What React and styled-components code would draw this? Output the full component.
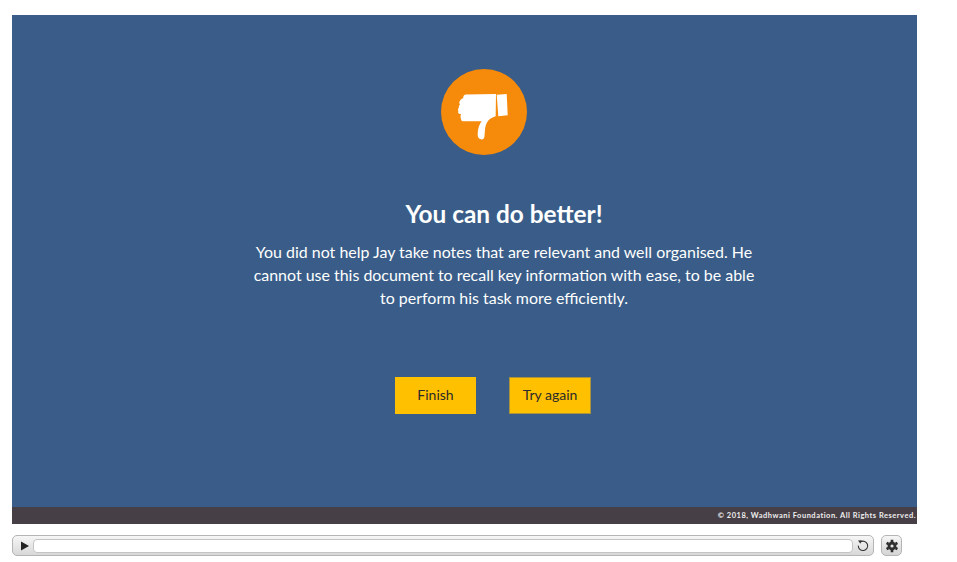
import React from "react";
import styled, { createGlobalStyle } from "styled-components";

const GlobalStyle = createGlobalStyle`
  html, body {
    margin: 0;
    padding: 0;
    background: #fff;
  }
`;

const Page = styled.div`
  width: 957px;
  height: 562px;
  padding: 15px 40px 0 12px;
  box-sizing: border-box;
  overflow: hidden;
  font-family: Lato, "Open Sans", sans-serif;
`;

const Slide = styled.div`
  height: 492px;
  background: #395d88;
  display: flex;
  flex-direction: column;
  align-items: center;
  color: #fff;
  padding: 54px 0 0 39px;
  box-sizing: border-box;
`;

const Badge = styled.div`
  width: 86px;
  height: 86px;
  border-radius: 50%;
  background: #f58a0b;
  flex: none;
`;

const Title = styled.h1`
  margin: 45px 0 0 40px;
  font-size: 24.4px;
  line-height: 28px;
  font-weight: 700;
`;

const Message = styled.p`
  margin: 12px 0 0 40px;
  width: 510px;
  font-size: 15.95px;
  line-height: 23px;
  text-align: center;
`;

const Actions = styled.div`
  display: flex;
  gap: 33px;
  margin: 68px 0 0 18px;
`;

const ActionButton = styled.button`
  width: ${(p) => (p.$outlined ? "82px" : "81px")};
  height: 37px;
  padding: 0 0 2px;
  border: 1px solid ${(p) => (p.$outlined ? "#a8923c" : "#ffc000")};
  background: #ffc000;
  color: #2b2b2b;
  font-family: inherit;
  font-size: 14px;
`;

const Footer = styled.div`
  height: 17px;
  background: #463f45;
  color: #eee;
  font-size: 7.5px;
  font-weight: 700;
  letter-spacing: 0.5px;
  line-height: 17px;
  text-align: right;
  padding-right: 1px;
`;

const ControlRow = styled.div`
  display: flex;
  gap: 7px;
  margin-top: 11px;
  width: 890px;
`;

const Bar = styled.div`
  width: 862px;
  height: 21px;
  box-sizing: border-box;
  display: flex;
  align-items: center;
  border: 1px solid #b5b5b5;
  border-radius: 5px;
  background: linear-gradient(#f6f6f6, #d8d8d8);
`;

const IconSlot = styled.div`
  width: 20px;
  padding-left: ${(p) => p.$nudge || 0}px;
  box-sizing: border-box;
  display: flex;
  align-items: center;
  justify-content: center;
  flex: none;
`;

const Track = styled.div`
  flex: 1;
  height: 12px;
  background: #fff;
  border: 1px solid #c4c4c4;
  border-radius: 4px;
`;

const GearButton = styled.div`
  width: 21px;
  height: 21px;
  box-sizing: border-box;
  border: 1px solid #b5b5b5;
  border-radius: 5px;
  background: linear-gradient(#f6f6f6, #d4d4d4);
  display: flex;
  align-items: center;
  justify-content: center;
`;

const ThumbDown = () => (
  <svg width="86" height="86" viewBox="0 0 86 86">
    <path
      fill="#fff"
      d="M24.5 25.6 L55 25 L54.7 47.3 C51 48.5 48.5 50 47 52 C45 54.5 44.4 57.5 44 60.7 C43.7 63 43.8 66 43.3 68.3 C42.8 70.2 41.2 70.8 40 70.3 C37.8 69.6 36.5 68 36.7 65.7 C36.8 62.5 37 60 38 57.3 C38.6 55.4 39.6 53.8 40.7 52.3 H24 C21.6 52.6 19.8 51.8 20 50 C19.4 48.4 19.4 46.6 20 45 C17.6 45.2 16.6 43.8 17.3 42.3 C16.8 40.8 17.2 39.2 18 38.3 C17.6 37.2 18 36.2 19 35.7 C18 34.2 18.2 32.6 19 31.7 C19.8 30.2 21 29.4 22.3 29 C22 27.4 23 25.8 24.5 25.6 Z"
    />
    <path fill="#fff" d="M55.7 25.7 L65.7 25 L66.7 46.3 L57.3 47.3 Z" />
  </svg>
);

const PlayIcon = () => (
  <svg width="10" height="10" viewBox="0 0 10 10">
    <path fill="#222" d="M1 0.5 L9 5 L1 9.5 Z" />
  </svg>
);

const ReplayIcon = () => (
  <svg width="12" height="13" viewBox="0 0 12 13">
    <path fill="none" stroke="#333" strokeWidth="1.1" d="M3.6 2.8 A4.7 4.7 0 1 1 1.3 6.6" />
    <path fill="#333" d="M1 1.5 L4.8 1.2 L3.4 4.8 Z" />
  </svg>
);

const GearIcon = () => (
  <svg width="14" height="14" viewBox="0 0 14 14">
    <circle cx="7" cy="7" r="3" fill="none" stroke="#2f2f2f" strokeWidth="2.8" />
    <path stroke="#2f2f2f" strokeWidth="2.6" d="M7 0.8 V3 M7 11 V13.2 M1.6 3.9 L3.5 5 M10.5 9 L12.4 10.1 M1.6 10.1 L3.5 9 M10.5 5 L12.4 3.9" />
  </svg>
);

export default function App() {
  return (
    <>
      <GlobalStyle />
      <Page>
        <Slide>
          <Badge>
            <ThumbDown />
          </Badge>
          <Title>You can do better!</Title>
          <Message>
            You did not help Jay take notes that are relevant and well organised. He
            cannot use this document to recall key information with ease, to be able
            to perform his task more efficiently.
          </Message>
          <Actions>
            <ActionButton>Finish</ActionButton>
            <ActionButton $outlined>Try again</ActionButton>
          </Actions>
        </Slide>
        <Footer>© 2018, Wadhwani Foundation. All Rights Reserved.</Footer>
        <ControlRow>
          <Bar>
            <IconSlot $nudge={4}>
              <PlayIcon />
            </IconSlot>
            <Track />
            <IconSlot>
              <ReplayIcon />
            </IconSlot>
          </Bar>
          <GearButton>
            <GearIcon />
          </GearButton>
        </ControlRow>
      </Page>
    </>
  );
}
